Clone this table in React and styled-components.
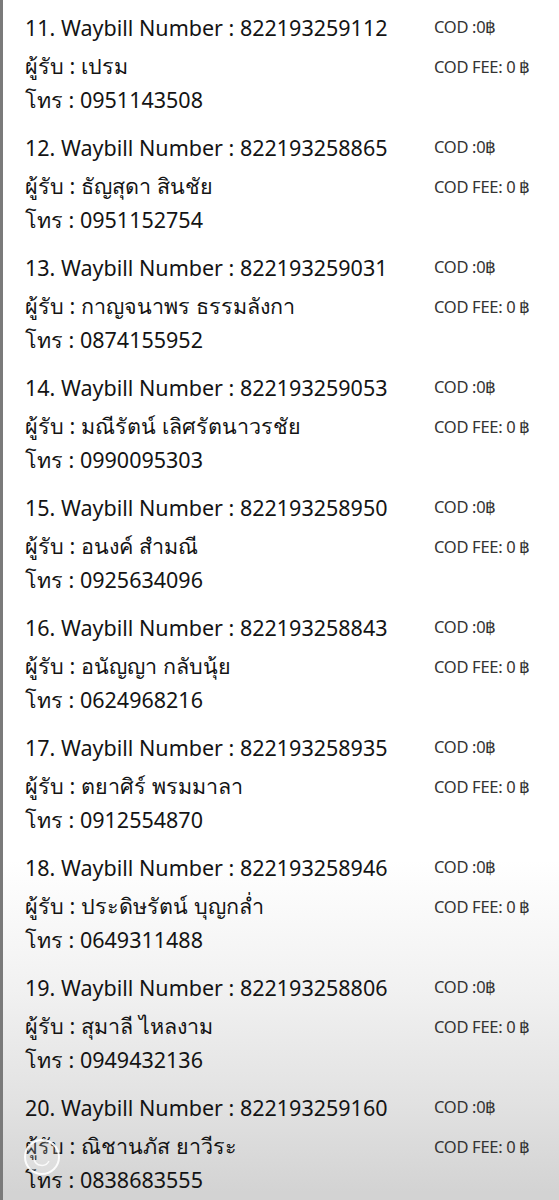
import styled, { createGlobalStyle } from "styled-components";

const GlobalStyle = createGlobalStyle`
  html, body {
    margin: 0;
    padding: 0;
    background: #ffffff;
  }
  body {
    font-family: "Noto Sans", "Liberation Sans", sans-serif;
  }
`;

const Page = styled.div`
  width: 559px;
  height: 1200px;
  display: flex;
  flex-direction: column;
  position: relative;
  overflow: hidden;
  border-left: 3px solid #7a7a7a;
  box-sizing: border-box;
  background: linear-gradient(
    to bottom,
    #ffffff 0,
    #ffffff 860px,
    #f1f1f1 990px,
    #e2e2e2 1100px,
    #d3d3d3 1192px
  );
`;

const List = styled.div`
  flex: 1;
  display: flex;
  flex-direction: column;
`;

const Entry = styled.div`
  height: 120px;
  display: grid;
  grid-template-columns: 409px 1fr;
  padding-left: 22px;
  box-sizing: border-box;
`;

const Info = styled.div`
  padding-top: 10px;
  display: flex;
  flex-direction: column;
`;

const Line = styled.div`
  height: 36px;
  box-sizing: border-box;
  padding-top: ${(p) => (p.$drop ? "4px" : "0")};
  line-height: ${(p) => (p.$drop ? "32px" : "36px")};
  font-size: 21.5px;
  color: #141414;
  white-space: nowrap;
`;

const Cod = styled.div`
  padding-top: 7px;
  display: flex;
  flex-direction: column;
`;

const CodLine = styled.div`
  height: 40px;
  line-height: 40px;
  font-size: 16.5px;
  color: #333333;
  letter-spacing: -0.3px;
  white-space: nowrap;
`;

const BottomBar = styled.div`
  height: 8px;
  background: #4d4d4d;
`;

const Spinner = styled.svg`
  position: absolute;
  left: 20px;
  bottom: 24px;
`;

const rows = [
  ["11", "822193259112", "เปรม", "0951143508"],
  ["12", "822193258865", "ธัญสุดา สินชัย", "0951152754"],
  ["13", "822193259031", "กาญจนาพร ธรรมลังกา", "0874155952"],
  ["14", "822193259053", "มณีรัตน์ เลิศรัตนาวรชัย", "0990095303"],
  ["15", "822193258950", "อนงค์ สำมณี", "0925634096"],
  ["16", "822193258843", "อนัญญา กลับนุ้ย", "0624968216"],
  ["17", "822193258935", "ตยาศิร์ พรมมาลา", "0912554870"],
  ["18", "822193258946", "ประดิษรัตน์ บุญกล่ำ", "0649311488"],
  ["19", "822193258806", "สุมาลี ไหลงาม", "0949432136"],
  ["20", "822193259160", "ณิชานภัส ยาวีระ", "0838683555"],
];

const App = () => {
  return (
    <Page>
      <GlobalStyle />
      <List>
        {rows.map(([no, waybill, name, tel]) => (
          <Entry key={no}>
            <Info>
              <Line>
                {no}. Waybill Number : {waybill}
              </Line>
              <Line $drop>ผู้รับ : {name}</Line>
              <Line>โทร : {tel}</Line>
            </Info>
            <Cod>
              <CodLine>COD :0฿</CodLine>
              <CodLine>COD FEE: 0 ฿</CodLine>
            </Cod>
          </Entry>
        ))}
      </List>
      <BottomBar />
      <Spinner width="38" height="38" viewBox="0 0 38 38">
        <circle
          cx="19"
          cy="19"
          r="17"
          fill="rgba(255,255,255,0.18)"
          stroke="rgba(255,255,255,0.9)"
          strokeWidth="2"
        />
        <path
          d="M11 21 A8 8 0 0 0 26 23"
          fill="none"
          stroke="rgba(255,255,255,0.85)"
          strokeWidth="1.5"
        />
      </Spinner>
    </Page>
  );
};

export default App;
